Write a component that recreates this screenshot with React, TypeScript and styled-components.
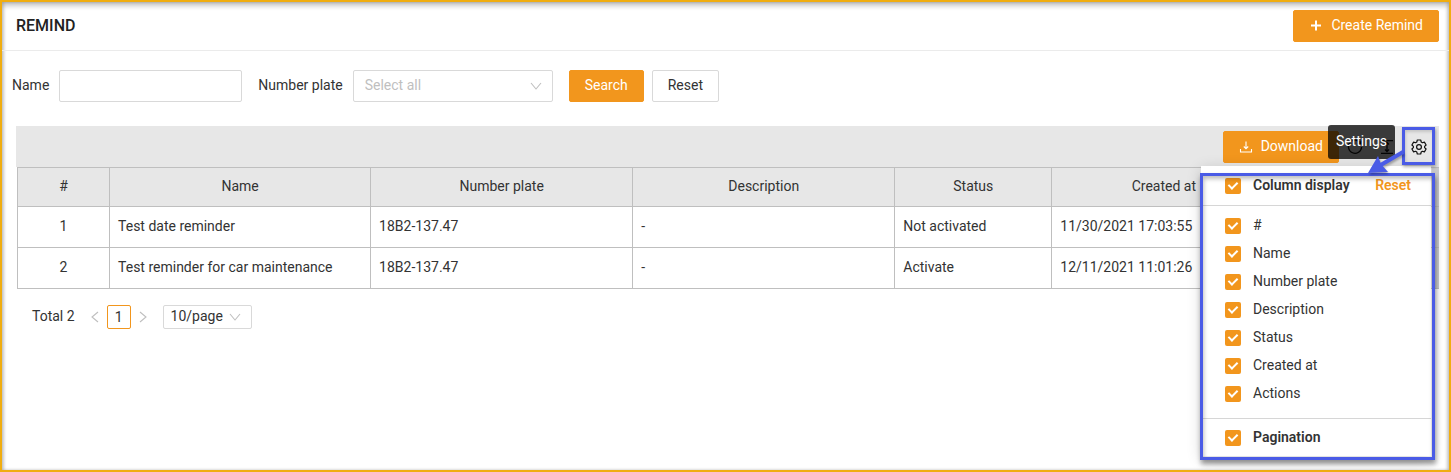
import React from 'react';
import styled, { createGlobalStyle, css } from 'styled-components';

const orange = '#f2961d';
const blue = '#4a5be6';

const GlobalStyle = createGlobalStyle`
  *, *::before, *::after { box-sizing: border-box; }
  body {
    margin: 0;
    background: #fff;
    color: #333;
    font: 14px/22px Roboto, "Liberation Sans", sans-serif;
  }
  button, input, select { font: inherit; color: inherit; margin: 0; }
`;

const Page = styled.div`
  min-height: 100vh;
  border: 2px solid #f0ad10;
  box-shadow: inset 0 4px 5px rgba(0, 0, 0, 0.22), inset 2px 0 3px rgba(0, 0, 0, 0.14), inset -2px 0 3px rgba(0, 0, 0, 0.14);
`;

const Header = styled.header`
  display: flex;
  align-items: center;
  justify-content: space-between;
  padding: 8px 10px 8px 14px;
  border-bottom: 1px solid #ebebeb;
`;

const Title = styled.h1`
  margin: 0;
  font-size: 16px;
  line-height: 24px;
  font-weight: 500;
  color: #222;
`;

const Button = styled.button<{ $primary?: boolean }>`
  display: inline-flex;
  align-items: center;
  justify-content: center;
  gap: 8px;
  height: 32px;
  padding: 0 15px 2px;
  border: 1px solid #d9d9d9;
  border-radius: 2px;
  background: #fff;
  white-space: nowrap;
  ${p => p.$primary && css`
    border-color: ${orange};
    background: ${orange};
    color: #fff;
  `}
`;

const Filters = styled.form`
  display: flex;
  align-items: center;
  padding: 19px 10px 24px;
  gap: 16px;
`;

const Field = styled.div`
  display: flex;
  align-items: center;
  gap: 10px;
  label { padding-bottom: 2px; }
`;

const TextInput = styled.input`
  width: 183px;
  height: 32px;
  padding: 4px 11px;
  border: 1px solid #d9d9d9;
  border-radius: 2px;
  background: #fff;
`;

const SelectBox = styled.div<{ $small?: boolean }>`
  display: grid;
  grid-template-rows: 100%;
  align-items: center;
  width: ${p => (p.$small ? 89 : 200)}px;
  height: ${p => (p.$small ? 24 : 32)}px;
  > * { grid-area: 1 / 1; }
  select {
    width: 100%;
    height: 100%;
    padding: 0 ${p => (p.$small ? 7 : 11)}px 2px;
    border: 1px solid #d9d9d9;
    border-radius: 2px;
    background: transparent;
    color: ${p => (p.$small ? '#333' : '#bfbfbf')};
    line-height: 20px;
    appearance: none;
  }
  svg {
    justify-self: end;
    margin-right: 11px;
    pointer-events: none;
  }
`;

const Actions = styled.div`
  display: flex;
  gap: 8px;
`;

const Content = styled.main`
  padding: 0 10px 8px 14px;
`;

const Toolbar = styled.div`
  position: relative;
  display: flex;
  align-items: center;
  justify-content: flex-end;
  gap: 8px;
  height: 41px;
  padding-right: 12px;
  background: #e7e7e7;
`;

const ToolIcons = styled.div`
  display: flex;
  align-items: center;
  gap: 16px;
`;

const IconButton = styled.button`
  display: flex;
  padding: 0;
  border: 0;
  background: none;
  color: #111;
`;

const Tooltip = styled.div`
  position: absolute;
  right: 44px;
  top: -1px;
  padding: 5px 8px 7px;
  border-radius: 3px;
  background: rgba(0, 0, 0, 0.75);
  color: #fff;
`;

const Highlight = styled.div`
  position: absolute;
  z-index: 3;
  right: 4px;
  top: 1px;
  width: 33px;
  height: 38px;
  border: 3px solid ${blue};
  pointer-events: none;
  box-shadow: 1px 2px 3px rgba(0, 0, 0, 0.3), inset 1px 2px 3px rgba(0, 0, 0, 0.15);
`;

const PanelHighlight = styled(Highlight)`
  top: 47px;
  width: 235px;
  height: 287px;
  box-shadow: 1px 4px 5px rgba(0, 0, 0, 0.4), inset 1px 3px 4px rgba(0, 0, 0, 0.25);
`;

const Arrow = styled.svg`
  position: absolute;
  z-index: 4;
  right: 32px;
  top: 20px;
  pointer-events: none;
  filter: drop-shadow(1px 2px 1px rgba(0, 0, 0, 0.3));
`;

const Panel = styled.section`
  position: absolute;
  z-index: 2;
  right: 8px;
  top: 40px;
  width: 230px;
  background: #fff;
  box-shadow: 0 3px 14px rgba(0, 0, 0, 0.16);
`;

const PanelBar = styled.div<{ $last?: boolean }>`
  display: flex;
  align-items: center;
  justify-content: space-between;
  height: ${p => (p.$last ? 37 : 39)}px;
  padding: 0 20px 0 24px;
`;

const CheckList = styled.ul`
  margin: 0;
  padding: 6px 24px 10px;
  list-style: none;
  border: solid #d6d6d6;
  border-width: 1px 0;
`;

const CheckLabel = styled.label<{ $strong?: boolean }>`
  display: flex;
  align-items: center;
  gap: 12px;
  height: 28px;
  font-weight: ${p => (p.$strong ? 600 : 400)};
  span { padding-bottom: 2px; }
`;

const CheckInput = styled.input`
  appearance: none;
  width: 16px;
  height: 16px;
  border-radius: 2px;
  background: ${orange};
  position: relative;
  &:checked::after {
    content: '';
    position: absolute;
    left: 5px;
    top: 2px;
    width: 6px;
    height: 9px;
    border: solid #fff;
    border-width: 0 2px 2px 0;
    transform: rotate(45deg);
  }
`;

const ResetLink = styled.button`
  padding: 0 0 2px;
  border: 0;
  background: none;
  color: ${orange};
  font-weight: 600;
`;

const Table = styled.table`
  width: calc(100% - 1px);
  margin-left: 1px;
  table-layout: fixed;
  border-collapse: collapse;
  th, td {
    height: 41px;
    padding: 0 8px 2px;
    border: 1px solid #bfbfbf;
    font-weight: 400;
    text-align: left;
    white-space: nowrap;
  }
  th { height: 39px; text-align: center; background-color: #e7e7e7; }
  td:first-child { text-align: center; }
  th:last-child, td:last-child {
    border-right: 0;
    background-image: linear-gradient(to left, #cdcdcf 8px, transparent 8px);
  }
`;

const Pager = styled.nav`
  display: flex;
  align-items: center;
  padding: 16px;
`;

const Total = styled.span`
  margin-right: 8px;
  padding-bottom: 2px;
`;

const PageList = styled.div`
  display: flex;
  margin-right: 8px;
`;

const PageButton = styled.button<{ $active?: boolean }>`
  display: flex;
  align-items: center;
  justify-content: center;
  width: 24px;
  height: 24px;
  padding: 0;
  border: 1px solid ${p => (p.$active ? orange : 'transparent')};
  border-radius: 2px;
  background: #fff;
  color: ${p => (p.$active ? '#333' : '#bfbfbf')};
`;

const Chevron = ({ d = 'M1 3l5 6 5-6' }: { d?: string }) => (
  <svg width="12" height="12" viewBox="0 0 12 12" fill="none" stroke="#bfbfbf" strokeWidth="1.1">
    <path d={d} />
  </svg>
);

const Check = ({ text, strong }: { text: string; strong?: boolean }) => (
  <CheckLabel $strong={strong}>
    <CheckInput type="checkbox" defaultChecked />
    <span>{text}</span>
  </CheckLabel>
);

const columns = [
  { name: '#', width: 92 },
  { name: 'Name', width: 261 },
  { name: 'Number plate', width: 262 },
  { name: 'Description', width: 262 },
  { name: 'Status', width: 157 },
  { name: 'Created at', width: 224 },
  { name: 'Actions', width: 163, covered: true },
];

const rows = [
  ['1', 'Test date reminder', '18B2-137.47', '-', 'Not activated', '11/30/2021 17:03:55', ''],
  ['2', 'Test reminder for car maintenance', '18B2-137.47', '-', 'Activate', '12/11/2021 11:01:26', ''],
];

const total = columns.reduce((sum, c) => sum + c.width, 0);

export default function App() {
  return (
    <Page>
      <GlobalStyle />
      <Header>
        <Title>REMIND</Title>
        <Button type="button" $primary>
          <svg width="14" height="14" viewBox="0 0 14 14" stroke="currentColor" strokeWidth="2">
            <path d="M7 2.500v10M2 7.500h10" />
          </svg>
          Create Remind
        </Button>
      </Header>
      <Filters onSubmit={e => e.preventDefault()}>
        <Field>
          <label htmlFor="name">Name</label>
          <TextInput id="name" />
        </Field>
        <Field>
          <label htmlFor="plate">Number plate</label>
          <SelectBox>
            <select id="plate"><option>Select all</option></select>
            <Chevron />
          </SelectBox>
        </Field>
        <Actions>
          <Button type="submit" $primary>Search</Button>
          <Button type="reset">Reset</Button>
        </Actions>
      </Filters>
      <Content>
        <Toolbar>
          <Button type="button" $primary>
            <svg width="14" height="14" viewBox="0 0 14 14" fill="none" stroke="currentColor" strokeWidth="1.1">
              <path d="M1.500 10v3h11v-3M7 2.500v7M4.800 7.500L7 9.800 9.200 7.500" />
            </svg>
            Download
          </Button>
          <ToolIcons>
            <IconButton type="button" aria-label="Reload">
              <svg width="16" height="16" viewBox="0 0 16 16" fill="none" stroke="currentColor" strokeWidth="1.3">
                <path d="M13.800 4.500A6.600 6.600 0 1 0 14.600 8M14 1.500v3.300h-3.300" />
              </svg>
            </IconButton>
            <IconButton type="button" aria-label="Density">
              <svg width="16" height="16" viewBox="0 0 16 16" fill="none" stroke="currentColor" strokeWidth="1.300">
                <path d="M2 1.700h12M2 14.300h12M8 3.500v9M6 5.500l2-2 2 2M6 10.500l2 2 2-2" />
              </svg>
            </IconButton>
            <IconButton type="button" aria-label="Settings">
              <svg width="16" height="16" viewBox="0 0 16 16" fill="none" stroke="currentColor" strokeWidth="1.2" strokeLinejoin="round">
                <path d="M6.300 1h3.400l.5 2 1.200.7 2-.6 1.700 2.900-1.500 1.400v1.200l1.500 1.400-1.700 2.900-2-.6-1.200.7-.5 2H6.300l-.5-2-1.200-.7-2 .6L.9 10l1.500-1.400V7.400L.9 6l1.700-2.900 2 .6L5.800 3z" />
                <circle cx="8" cy="8" r="2.400" />
              </svg>
            </IconButton>
          </ToolIcons>
          <Tooltip role="tooltip">Settings</Tooltip>
          <Highlight />
          <Panel>
            <PanelBar>
              <Check text="Column display" strong />
              <ResetLink type="button">Reset</ResetLink>
            </PanelBar>
            <CheckList>
              {columns.map(c => <li key={c.name}><Check text={c.name} /></li>)}
            </CheckList>
            <PanelBar $last><Check text="Pagination" strong /></PanelBar>
          </Panel>
          <PanelHighlight />
          <Arrow width="44" height="32" viewBox="0 0 44 32">
            <path d="M40 6L16 20" stroke={blue} strokeWidth="4" />
            <path d="M5 27L15 10l3 8 7 8z" fill={blue} />
          </Arrow>
        </Toolbar>
        <Table>
          <colgroup>
            {columns.map(c => <col key={c.name} style={{ width: `${(c.width / total) * 100}%` }} />)}
          </colgroup>
          <thead>
            <tr>
              {columns.map(c => (
                <th key={c.name} scope="col" aria-label={c.name}>{c.covered ? null : c.name}</th>
              ))}
            </tr>
          </thead>
          <tbody>
            {rows.map(r => <tr key={r[0]}>{r.map((cell, i) => <td key={i}>{cell}</td>)}</tr>)}
          </tbody>
        </Table>
        <Pager aria-label="Pagination">
          <Total>Total 2</Total>
          <PageList>
            <PageButton type="button" aria-label="Previous page"><Chevron d="M9 1L3 6l6 5" /></PageButton>
            <PageButton type="button" $active>1</PageButton>
            <PageButton type="button" aria-label="Next page"><Chevron d="M3 1l6 5-6 5" /></PageButton>
          </PageList>
          <SelectBox $small>
            <select aria-label="Page size"><option>10/page</option></select>
            <Chevron />
          </SelectBox>
        </Pager>
      </Content>
    </Page>
  );
}
